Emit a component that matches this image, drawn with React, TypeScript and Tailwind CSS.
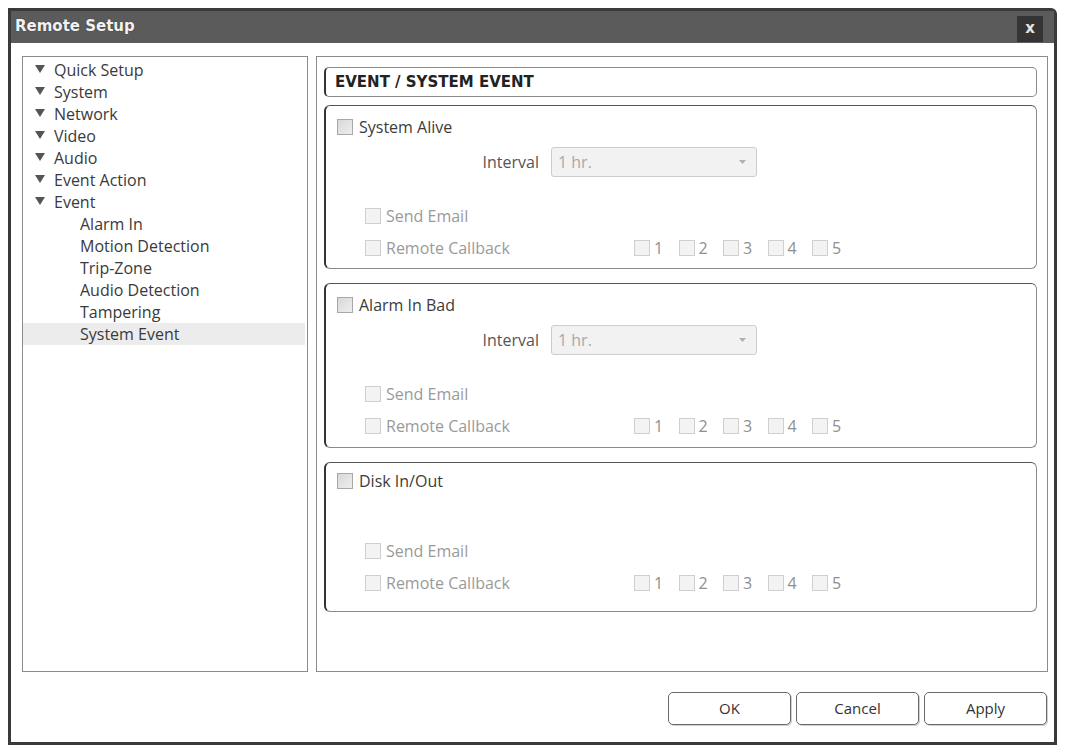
import React from 'react';

type TreeItem = { label: string; sub?: boolean; selected?: boolean };

const tree: TreeItem[] = [
  { label: 'Quick Setup' },
  { label: 'System' },
  { label: 'Network' },
  { label: 'Video' },
  { label: 'Audio' },
  { label: 'Event Action' },
  { label: 'Event' },
  { label: 'Alarm In', sub: true },
  { label: 'Motion Detection', sub: true },
  { label: 'Trip-Zone', sub: true },
  { label: 'Audio Detection', sub: true },
  { label: 'Tampering', sub: true },
  { label: 'System Event', sub: true, selected: true },
];

const Arrow = () => (
  <svg width="10" height="9" viewBox="0 0 10 9" className="shrink-0 -mt-[2px]">
    <polygon points="0,0 10,0 5,8" fill="#555" />
  </svg>
);

const Check = ({ dim }: { dim?: boolean }) => (
  <span
    className={
      dim
        ? 'inline-block w-[16px] h-[16px] shrink-0 border border-[#cfcfcf] bg-[#f3f3f3]'
        : 'inline-block w-[16px] h-[16px] shrink-0 border border-[#a8a8a8] bg-gradient-to-br from-[#d8d8d8] to-[#eeeeee]'
    }
  />
);

const IntervalRow = () => (
  <div className="flex items-center mt-[12px] h-[30px]">
    <div className="w-[213px] text-right text-[#555]">Interval</div>
    <div className="ml-[12px] w-[206px] h-[30px] border border-[#cdcdcd] rounded-[3px] bg-[#f2f2f2] flex items-center justify-between pl-[6px] pr-[10px]">
      <span className="text-[#a8a8a8]">1 hr.</span>
      <svg width="7" height="4" viewBox="0 0 7 4">
        <polygon points="0,0 7,0 3.5,4" fill="#b0b0b0" />
      </svg>
    </div>
  </div>
);

const Notify = ({ first }: { first: string }) => (
  <>
    <div className={`flex items-center h-[17px] pl-[39px] ${first}`}>
      <Check dim />
      <span className="ml-[5px] text-[#9a9a9a]">Send Email</span>
    </div>
    <div className="flex items-center h-[17px] pl-[39px] mt-[15px]">
      <div className="w-[269px] flex items-center">
        <Check dim />
        <span className="ml-[5px] text-[#9a9a9a]">Remote Callback</span>
      </div>
      {[1, 2, 3, 4, 5].map((n) => (
        <div key={n} className="w-[44.5px] flex items-center">
          <Check dim />
          <span className="ml-[4px] text-[#8f8f8f]">{n}</span>
        </div>
      ))}
    </div>
  </>
);

const Section = ({
  title,
  interval,
  className,
}: {
  title: string;
  interval?: boolean;
  className: string;
}) => (
  <div
    className={`border border-[#8a8a8a] border-t-[#555] border-l-2 border-l-[#333] rounded-[6px] flex flex-col ${className}`}
  >
    <div className="flex items-center h-[17px] pl-[11px]">
      <Check />
      <span className="ml-[6px] text-[#3c3c3c]">{title}</span>
    </div>
    {interval && <IntervalRow />}
    <Notify first={interval ? 'mt-[30px]' : 'mt-[53px]'} />
  </div>
);

const Btn = ({ label }: { label: string }) => (
  <button className="w-[123px] h-[33px] border border-[#6a6a6a] rounded-[5px] bg-white text-[#333] text-[15px] shadow-[1px_1px_0_#d0d0d0]">
    {label}
  </button>
);

export default function App() {
  return (
    <div className="w-[1065px] h-[748px] bg-white pt-[8px] pl-[8px] font-['Open_Sans',sans-serif] text-[16px] leading-none overflow-hidden">
      <div className="w-[1049px] h-[737px] border-[3px] border-[#3a3a3a] rounded-tr-[6px] flex flex-col">
        {/* title bar */}
        <div className="h-[32px] shrink-0 bg-[#5b5b5b] flex items-center justify-between pl-[4px] pr-[11px]">
          <span className="font-['DejaVu_Sans',sans-serif] font-bold text-[15px] text-[#f2f2f2] -mt-[2px] [text-shadow:0_0_1px_#222]">
            Remote Setup
          </span>
          <div className="w-[26px] h-[26px] mt-[4px] bg-[#343434] flex items-center justify-center">
            <span className="font-['DejaVu_Sans',sans-serif] font-bold text-[15px] text-[#e4e4e4] -mt-[2px]">x</span>
          </div>
        </div>

        {/* body */}
        <div className="flex-1 flex flex-col pt-[13px] pl-[11px] pr-[6px]">
          <div className="flex h-[616px] gap-[8px]">
            {/* tree */}
            <div className="w-[286px] border border-[#8c8c8c] pt-[2px]">
              {tree.map((t) => (
                <div
                  key={t.label}
                  className={`h-[22px] flex items-center mr-[2px] ${t.sub ? 'pl-[57px]' : 'pl-[12px]'} ${
                    t.selected ? 'bg-[#ececec]' : ''
                  }`}
                >
                  {!t.sub && <Arrow />}
                  <span className={`${t.sub ? '' : 'ml-[9px]'} text-[#3a3a3a]`}>{t.label}</span>
                </div>
              ))}
            </div>

            {/* content */}
            <div className="w-[732px] border border-[#8c8c8c] pt-[10px] pl-[7px] pr-[10px]">
              <div className="h-[30px] border border-[#8a8a8a] border-l-2 border-l-[#333] rounded-[5px] flex items-center pl-[9px]">
                <span className="font-['DejaVu_Sans',sans-serif] font-bold text-[15px] text-[#222]">
                  EVENT / SYSTEM EVENT
                </span>
              </div>
              <Section title="System Alive" interval className="mt-[8px] h-[164px] pt-[12px]" />
              <Section title="Alarm In Bad" interval className="mt-[14px] h-[165px] pt-[12px]" />
              <Section title="Disk In/Out" className="mt-[14px] h-[150px] pt-[9px]" />
            </div>
          </div>

          <div className="flex justify-end gap-[5px] mt-[20px] pr-[1px]">
            <Btn label="OK" />
            <Btn label="Cancel" />
            <Btn label="Apply" />
          </div>
        </div>
      </div>
    </div>
  );
}
